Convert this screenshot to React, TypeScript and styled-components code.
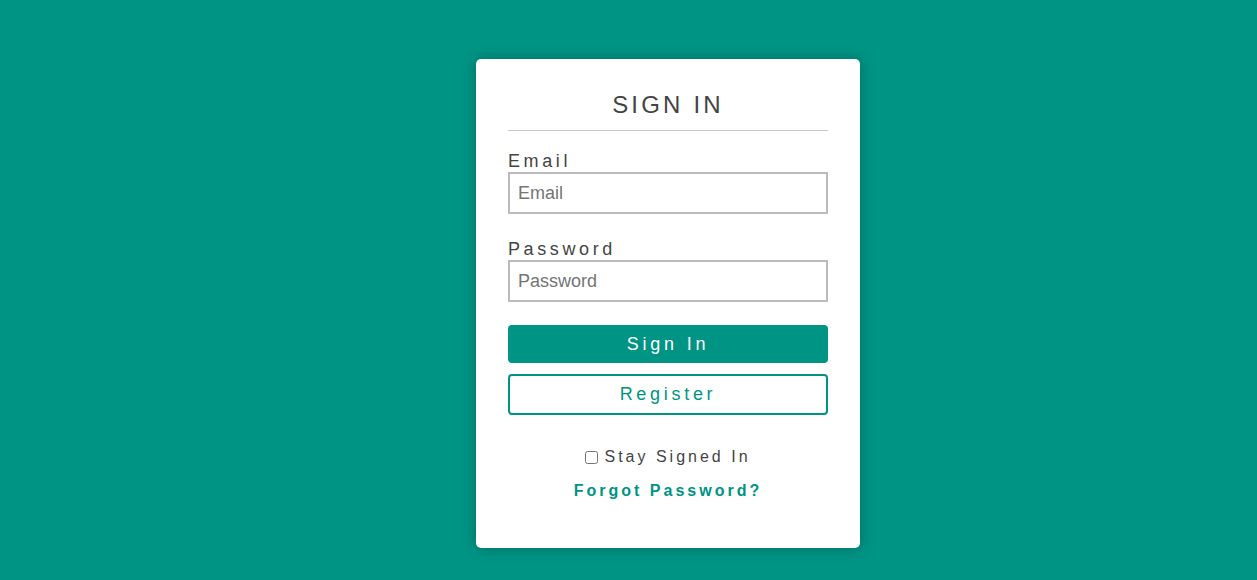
import React from "react";
import styled, { createGlobalStyle } from "styled-components";

const teal = "#009485";
const ink = "#444";

const Global = createGlobalStyle`
  html, body {
    margin: 0;
    padding: 0;
    background: ${teal};
    font-family: "Liberation Sans", Arial, sans-serif;
  }
`;

const Page = styled.div`
  min-height: 580px;
  display: flex;
  justify-content: center;
  align-items: flex-start;
  padding: 59px 0 0 79px;
  box-sizing: border-box;
`;

const Card = styled.form`
  width: 384px;
  box-sizing: border-box;
  background: #fff;
  border-radius: 5px;
  box-shadow: 0 0 14px rgba(0, 0, 0, 0.28);
  padding: 32px 32px 48px;
  display: flex;
  flex-direction: column;
`;

const Title = styled.h1`
  margin: 0;
  font-size: 24px;
  font-weight: 400;
  letter-spacing: 3.2px;
  color: ${ink};
  text-align: center;
  line-height: 27px;
  padding-bottom: 12px;
  border-bottom: 1px solid #c8c8c8;
`;

const Label = styled.label<{ $top: number }>`
  display: block;
  margin-top: ${(p) => p.$top}px;
  margin-bottom: 0;
  font-size: 18px;
  line-height: 22px;
  letter-spacing: 3.6px;
  color: ${ink};
`;

const Input = styled.input`
  width: 100%;
  height: 42px;
  box-sizing: border-box;
  border: 2px solid #bbb;
  padding: 0 8px;
  font-family: "Liberation Sans", Arial, sans-serif;
  font-size: 18px;
  color: ${ink};
  outline: none;
  &::placeholder {
    color: #757575;
  }
`;

const Button = styled.button<{ $outline?: boolean; $top: number }>`
  width: 100%;
  margin-top: ${(p) => p.$top}px;
  height: ${(p) => (p.$outline ? 41 : 38)}px;
  box-sizing: border-box;
  border-radius: 4px;
  border: ${(p) => (p.$outline ? `2px solid ${teal}` : "none")};
  background: ${(p) => (p.$outline ? "#fff" : teal)};
  color: ${(p) => (p.$outline ? teal : "#fff")};
  font-family: "Liberation Sans", Arial, sans-serif;
  font-size: 18px;
  letter-spacing: ${(p) => (p.$outline ? 3.7 : 3.8)}px;
  cursor: pointer;
  padding: 0;
`;

const StayRow = styled.label`
  margin-top: 33px;
  display: flex;
  justify-content: center;
  align-items: center;
  font-size: 16px;
  line-height: 18px;
  letter-spacing: 3px;
  color: ${ink};
`;

const Check = styled.input`
  width: 13px;
  height: 13px;
  margin: 0 6px 0 0;
`;

const Forgot = styled.a`
  margin-top: 16px;
  display: block;
  text-align: center;
  font-size: 16px;
  line-height: 18px;
  font-weight: 700;
  letter-spacing: 3px;
  color: ${teal};
  text-decoration: none;
`;

export default function App() {
  return (
    <>
      <Global />
      <Page>
        <Card onSubmit={(e) => e.preventDefault()}>
          <Title>SIGN IN</Title>
          <Label $top={19} htmlFor="email">Email</Label>
          <Input id="email" type="email" placeholder="Email" />
          <Label $top={24} htmlFor="pw">Password</Label>
          <Input id="pw" type="password" placeholder="Password" />
          <Button $top={23} type="submit">Sign In</Button>
          <Button $top={11} $outline type="button">Register</Button>
          <StayRow>
            <Check type="checkbox" />
            Stay Signed In
          </StayRow>
          <Forgot href="#">Forgot Password?</Forgot>
        </Card>
      </Page>
    </>
  );
}
